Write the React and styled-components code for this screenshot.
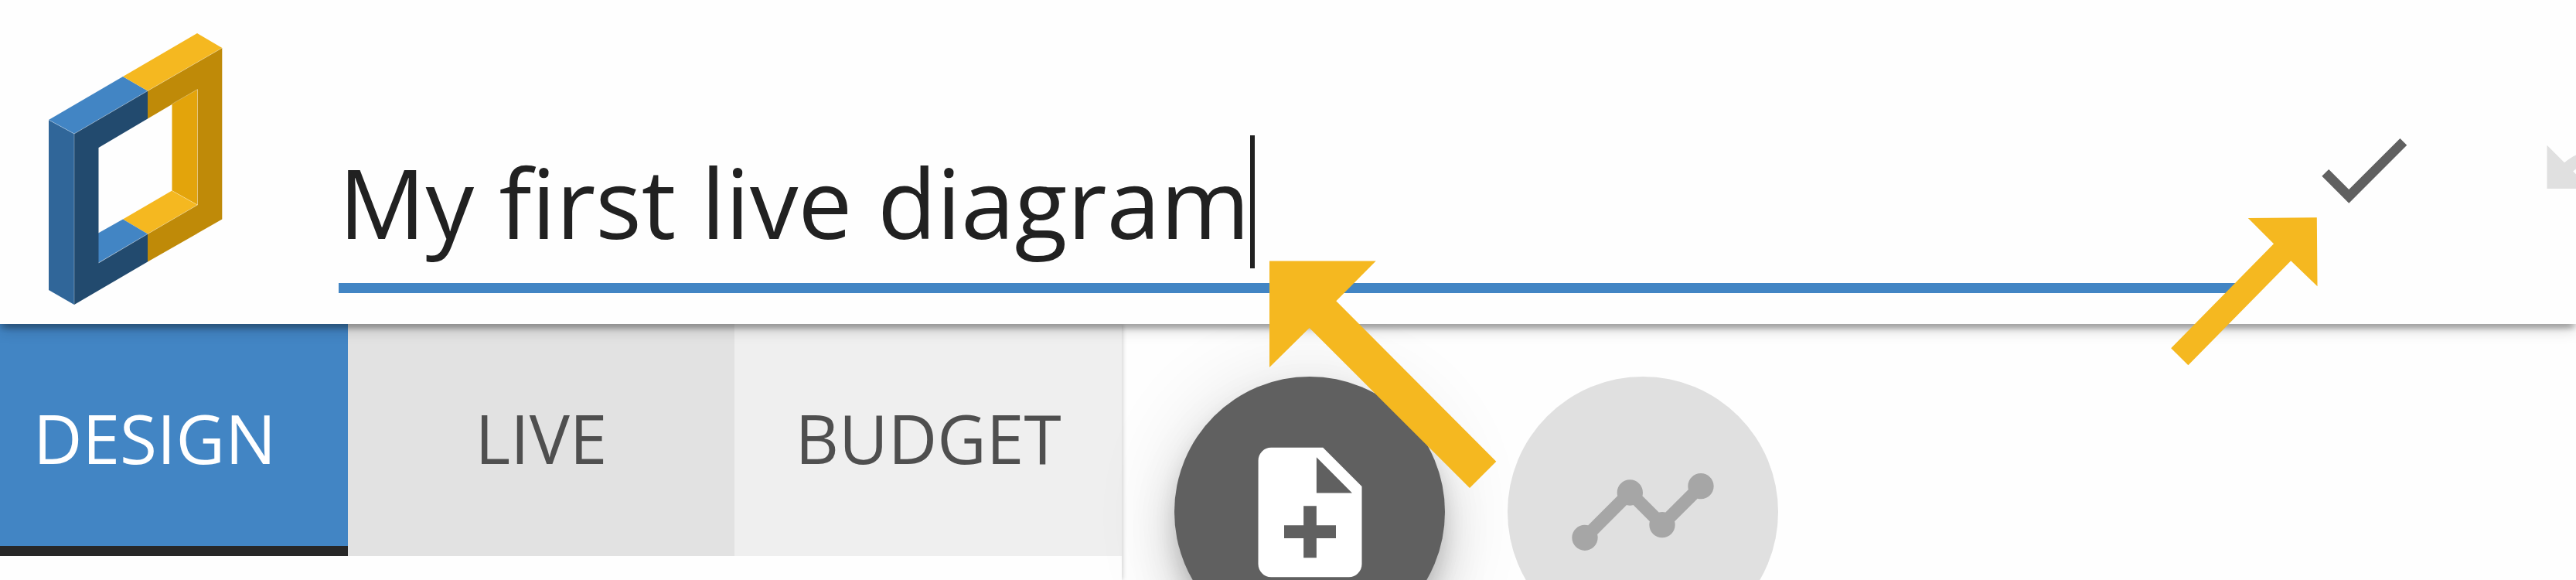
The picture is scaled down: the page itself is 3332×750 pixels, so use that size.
import React from "react";
import styled, { createGlobalStyle } from "styled-components";

const GlobalStyle = createGlobalStyle`
  html, body { margin: 0; padding: 0; background: #fff; overflow: hidden; }
  * { box-sizing: border-box; }
`;

const Page = styled.div`
  position: relative;
  display: flex;
  flex-direction: column;
  width: 3332px;
  height: 750px;
  overflow: hidden;
  background: #fefefe;
  font-family: "Open Sans", "Noto Sans", sans-serif;
`;

const Header = styled.header`
  position: relative;
  z-index: 2;
  flex: none;
  display: flex;
  align-items: flex-start;
  height: 419px;
  padding-left: 63px;
  background: #fefefe;
  box-shadow:
    0 6px 19px 0 rgba(0, 0, 0, 0.2),
    0 6px 6px 0 rgba(0, 0, 0, 0.14),
    0 12px 6px -6px rgba(0, 0, 0, 0.12);
`;

const Logo = styled.svg`
  flex: none;
  width: 225px;
  height: 352px;
  margin-top: 43px;
`;

const TitleField = styled.div`
  flex: none;
  display: flex;
  align-items: center;
  width: 2462px;
  height: 231px;
  margin: 148px 0 0 150px;
  border-bottom: 13px solid #4285c4;
`;

const TitleText = styled.span`
  font-size: 125px;
  line-height: 172px;
  color: #212121;
  white-space: pre;
  margin-top: 8px;
`;

const Caret = styled.span`
  width: 6px;
  height: 172px;
  margin-top: 8px;
  background: #212121;
`;

const Actions = styled.div`
  flex: none;
  display: flex;
  margin: 69px 0 0 7px;
`;

const IconButton = styled.div`
  flex: none;
  display: flex;
  align-items: center;
  justify-content: center;
  width: 300px;
  height: 300px;
  color: ${(p) => (p.$disabled ? "#e0e0e0" : "#606060")};
`;

const Glyph = styled.svg`
  flex: none;
  width: ${(p) => p.$size}px;
  height: ${(p) => p.$size}px;
  fill: currentColor;
`;

const Body = styled.main`
  flex: 1;
  display: flex;
  min-height: 0;
`;

const Sidebar = styled.aside`
  flex: none;
  width: 1451px;
  background: #fefefe;
  box-shadow: 1px 0 6px rgba(0, 0, 0, 0.2);
`;

const Tabs = styled.nav`
  display: flex;
  height: 300px;
  margin-left: -50px;
`;

const Tab = styled.div`
  flex: none;
  display: flex;
  align-items: center;
  justify-content: center;
  width: ${(p) => p.$width || 500}px;
  padding: ${(p) => (p.$active ? "7px 0 0" : "0 0 6px")};
  font-size: 87.5px;
  line-height: 120px;
  color: ${(p) => (p.$active ? "#fff" : "#4f4f4f")};
  background: ${(p) => p.$bg};
  border-bottom: ${(p) => (p.$active ? "13px solid #272727" : "0")};
`;

const Canvas = styled.section`
  position: relative;
  flex: 1;
  display: flex;
  gap: 81px;
  padding: 68.4px 0 0 68px;
`;

const Fab = styled.div`
  flex: none;
  display: flex;
  align-items: center;
  justify-content: center;
  width: 350px;
  height: 350px;
  border-radius: 50%;
  color: ${(p) => (p.$disabled ? "#a6a6a6" : "#fff")};
  background: ${(p) => (p.$disabled ? "#e0e0e0" : "#606060")};
  box-shadow: ${(p) =>
    p.$disabled
      ? "none"
      : `0 19px 31px -6px rgba(0, 0, 0, 0.2),
         0 37px 62px 0 rgba(0, 0, 0, 0.14),
         0 6px 112px 0 rgba(0, 0, 0, 0.12)`};
`;

const Annotations = styled.svg`
  position: absolute;
  z-index: 3;
  inset: 0;
  width: 3332px;
  height: 750px;
  fill: #f5b820;
  pointer-events: none;
`;

const ICONS = {
  check: "M9 16.17L4.83 12l-1.42 1.41L9 19 21 7l-1.41-1.41z",
  undo: "M12.5 8c-2.65 0-5.05.99-6.9 2.6L2 7v9h9l-3.62-3.62c1.39-1.16 3.16-1.88 5.12-1.88 3.54 0 6.55 2.31 7.6 5.5l2.37-.78C21.08 11.03 17.15 8 12.5 8z",
  noteAdd:
    "M14 2H6c-1.1 0-1.99.9-1.99 2L4 20c0 1.1.89 2 1.99 2H18c1.1 0 2-.9 2-2V8l-6-6zm2 14h-3v3h-2v-3H8v-2h3v-3h2v3h3v2zm-3-7V3.5L18.5 9H13z",
  timeline:
    "M23 8c0 1.1-.9 2-2 2-.18 0-.35-.02-.51-.07l-3.56 3.55c.05.16.07.34.07.52 0 1.1-.9 2-2 2s-2-.9-2-2c0-.18.02-.36.07-.52l-2.55-2.55c-.16.05-.34.07-.52.07s-.36-.02-.52-.07l-4.55 4.56c.05.16.07.33.07.51 0 1.1-.9 2-2 2s-2-.9-2-2 .9-2 2-2c.18 0 .35.02.51.07l4.56-4.55C8.02 9.36 8 9.18 8 9c0-1.1.9-2 2-2s2 .9 2 2c0 .18-.02.36-.07.52l2.55 2.55c.16-.05.34-.07.52-.07s.36.02.52.07l3.55-3.56C19.02 8.35 19 8.18 19 8c0-1.1.9-2 2-2s2 .9 2 2z",
};

function Icon({ name, size }) {
  return (
    <Glyph viewBox="0 0 24 24" $size={size} aria-hidden="true">
      <path d={ICONS[name]} />
    </Glyph>
  );
}

function BrandLogo() {
  return (
    <Logo viewBox="63 43 225 352" aria-hidden="true">
      <polygon fill="#306699" points="63,155 96,173 96,394 63,375" />
      <polygon fill="#4285c4" points="63,155 159,99 191,117.5 96,173" />
      <polygon fill="#f5b820" points="159,99 255,43 287.3,62 191,117.5" />
      <polygon fill="#e3a40b" points="222.5,134 255.5,115 255.5,265 222.5,246.5" />
      <polygon fill="#f5b820" points="222.5,246.5 255.5,265 191,302.5 159,283.5" />
      <polygon fill="#4285c4" points="159,283.5 191,302.5 127,340 127,301.5" />
      <polygon
        fill="#224a6e"
        points="96,173 191,117.5 191,153.5 127.5,191 127.5,340 191,302.5 191,338.5 96,394"
      />
      <polygon
        fill="#bf8a08"
        points="191,117.5 287.3,62 287.3,283.5 191,338.5 191,302.5 255.5,265 255.5,115.5 191,153.5"
      />
      <g fill="none" stroke="#fff" strokeOpacity="0.3" strokeWidth="1">
        <path d="M63 155L96 173V394M96 173L191 117.5L287.3 62" />
        <path d="M127.5 340L191 302.5L255.5 265V115.5L222.5 134.5M222.5 246.5L255.5 265" />
      </g>
    </Logo>
  );
}

export default function App() {
  return (
    <Page>
      <GlobalStyle />
      <Header>
        <BrandLogo />
        <TitleField>
          <TitleText>My first live diagram</TitleText>
          <Caret />
        </TitleField>
        <Actions>
          <IconButton>
            <Icon name="check" size={150} />
          </IconButton>
          <IconButton $disabled>
            <Icon name="undo" size={150} />
          </IconButton>
        </Actions>
      </Header>
      <Body>
        <Sidebar>
          <Tabs>
            <Tab $active $bg="#4285c4">DESIGN</Tab>
            <Tab $bg="#e2e2e2">LIVE</Tab>
            <Tab $bg="#efefef" $width={501}>BUDGET</Tab>
          </Tabs>
        </Sidebar>
        <Canvas>
          <Fab>
            <Icon name="noteAdd" size={201} />
          </Fab>
          <Fab $disabled>
            <Icon name="timeline" size={200} />
          </Fab>
        </Canvas>
      </Body>
      <Annotations viewBox="0 0 3332 750" aria-hidden="true">
        <polygon points="1642,337.5 1779.7,337.5 1728.3,389.3 1935.3,596.7 1901,631 1693.7,424 1642,475" />
        <polygon points="2907.8,282 2996.8,281.3 2997.5,370.3 2963.2,337.3 2830.4,472.3 2808.2,450.3 2941,315.3" />
      </Annotations>
    </Page>
  );
}
